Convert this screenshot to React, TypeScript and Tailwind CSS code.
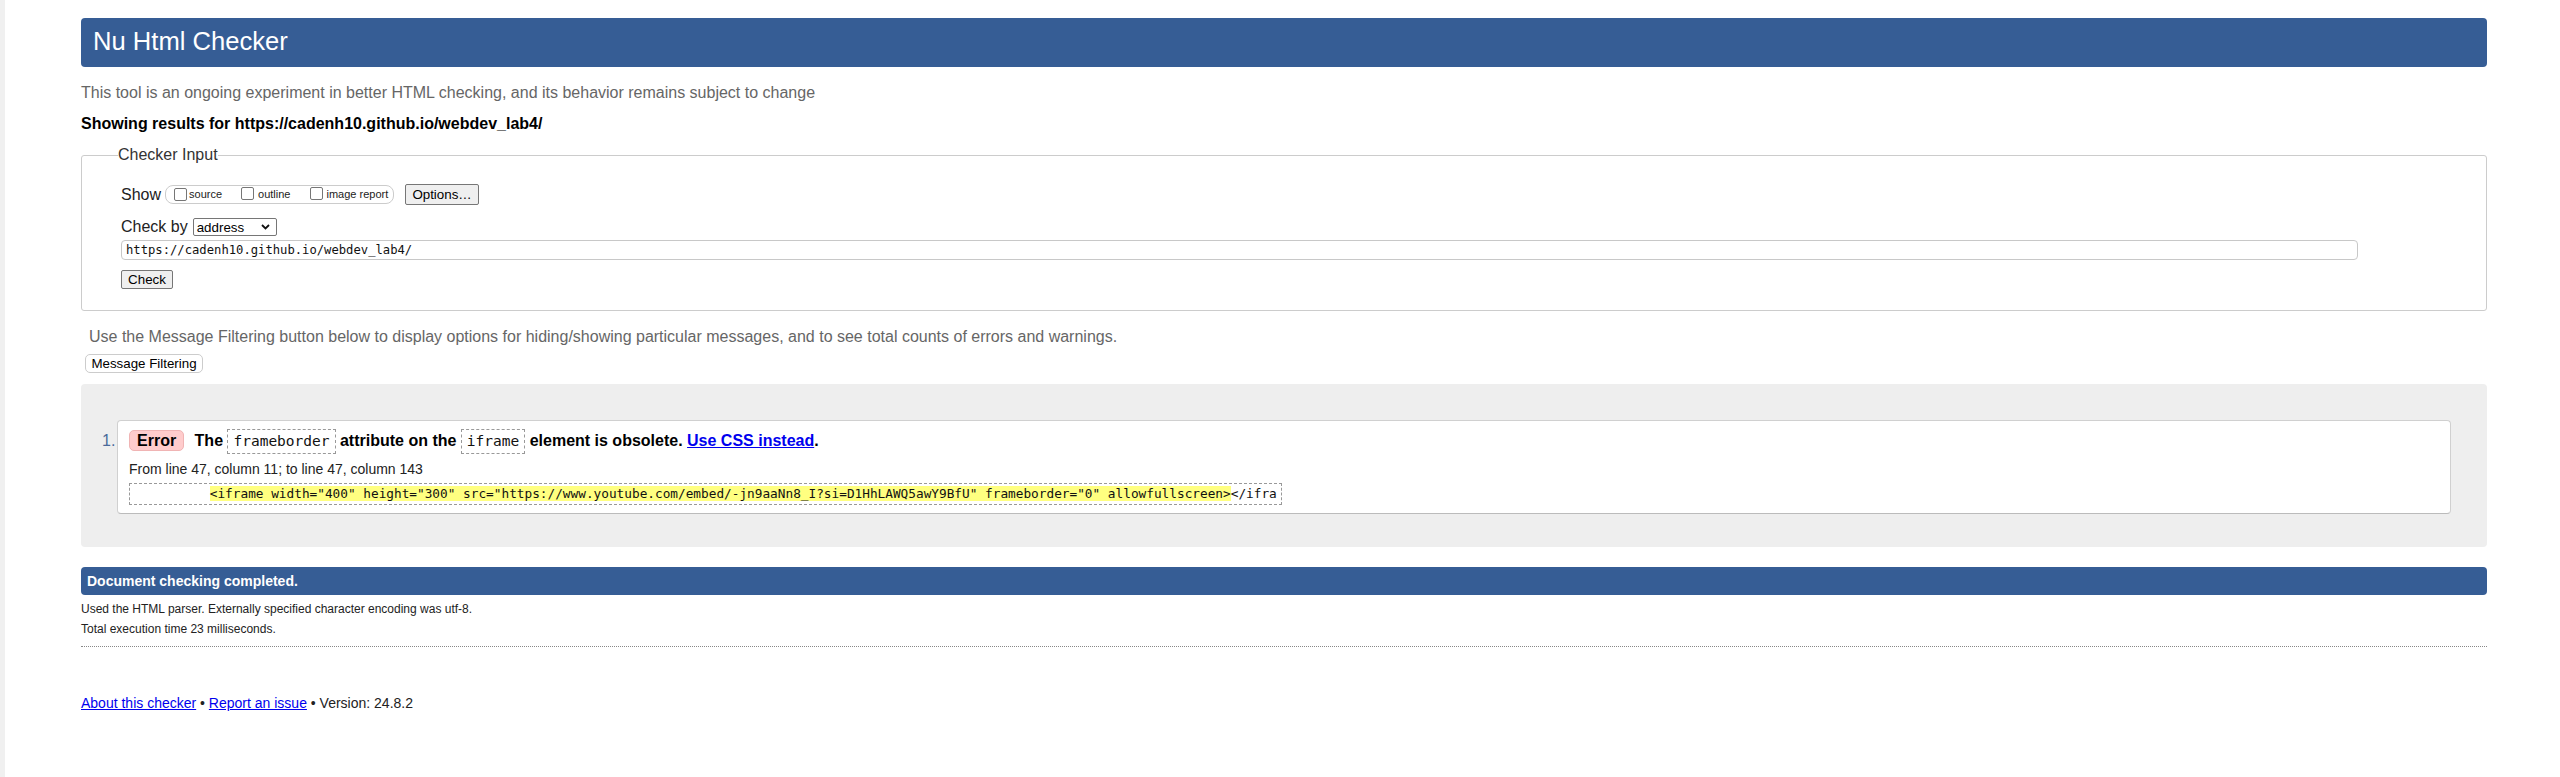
const sans = { fontFamily: '"Liberation Sans", Arial, sans-serif' };

const Checkbox = () => (
  <span className="inline-block w-[13px] h-[13px] border border-[#767676] rounded-[2px] bg-white shrink-0" />
);

const CodeBox = ({ children }: { children: React.ReactNode }) => (
  <code className="inline-block border border-dashed border-[#999] px-[5px] leading-[23px] text-[14.5px] font-normal font-['DejaVu_Sans_Mono',monospace] text-[#111] align-baseline">
    {children}
  </code>
);

const extract =
  '<iframe width="400" height="300" src="https://www.youtube.com/embed/-jn9aaNn8_I?si=D1HhLAWQ5awY9BfU" frameborder="0" allowfullscreen>';

export default function App() {
  return (
    <div className="min-h-[777px] bg-white flex text-black font-['Liberation_Sans',Arial,sans-serif]" style={sans}>
      <div className="w-[5px] bg-[#f0f0f0] shrink-0" />
      <div className="ml-[76px] w-[2406px] flex flex-col">
        {/* header */}
        <h1 className="mt-[18px] h-[49px] rounded-[4px] bg-[#365d95] text-white text-[25.6px] font-normal leading-[30px] pt-[8px] pl-[12px]">
          Nu Html Checker
        </h1>

        <p className="mt-[17px] text-[16px] leading-[18px] text-[#666]">
          This tool is an ongoing experiment in better HTML checking, and its behavior remains subject to change
        </p>
        <p className="mt-[13px] text-[16px] leading-[18px] font-bold">
          Showing results for https://cadenh10.github.io/webdev_lab4/
        </p>

        {/* checker input */}
        <fieldset className="mt-[13px] border border-[#ccc] rounded-[3px] pb-[21px]">
          <legend className="ml-[36px] text-[16px] leading-[18px] text-[#333]">Checker Input</legend>

          <div className="pl-[39px]">
            <div className="mt-[20px] flex items-center h-[21px]">
              <span className="text-[16px] leading-[18px] text-[#222]">Show</span>
              <div className="ml-[4px] h-[19px] w-[229px] border border-[#ccc] rounded-[8px] flex items-center pl-[8px] text-[11px] leading-[13px] text-[#222]">
                <Checkbox />
                <span className="ml-[2px]">source</span>
                <span className="ml-[19px]"><Checkbox /></span>
                <span className="ml-[4px]">outline</span>
                <span className="ml-[20px]"><Checkbox /></span>
                <span className="ml-[3px]">image report</span>
              </div>
              <div className="ml-[11px] h-[21px] w-[74px] border border-[#767676] rounded-[2px] bg-[#efefef] flex items-center justify-center text-[13.33px] leading-[15px]">
                Options…
              </div>
            </div>

            <div className="mt-[13px] flex items-center h-[18px]">
              <span className="text-[16px] leading-[18px] text-[#222]">Check by</span>
              <div className="ml-[5px] h-[18px] w-[84px] border border-[#767676] rounded-[2px] bg-white flex items-center pl-[3px] pr-[6px] justify-between text-[13.33px] leading-[15px]">
                <span>address</span>
                <svg width="9" height="6" viewBox="0 0 9 6">
                  <path d="M1 1l3.5 3.5L8 1" fill="none" stroke="#111" strokeWidth="1.8" />
                </svg>
              </div>
            </div>

            <div className="mt-[4px] h-[20px] w-[2237px] border border-[#c8c8c8] rounded-[4px] flex items-center pl-[4px] text-[12.2px] leading-[14px] text-[#111] font-['DejaVu_Sans_Mono',monospace]">
              https://cadenh10.github.io/webdev_lab4/
            </div>

            <div className="mt-[10px] h-[19px] w-[52px] border border-[#767676] rounded-[2px] bg-[#efefef] flex items-center justify-center text-[13.33px] leading-[15px]">
              Check
            </div>
          </div>
        </fieldset>

        <p className="mt-[17px] ml-[8px] text-[16px] leading-[18px] text-[#666]">
          Use the Message Filtering button below to display options for hiding/showing particular messages, and to see total counts of errors and warnings.
        </p>
        <div className="mt-[8px] ml-[4px] h-[19px] w-[118px] border border-[#ccc] rounded-[5px] bg-white flex items-center justify-center text-[13.33px] leading-[15px]">
          Message Filtering
        </div>

        {/* results */}
        <div className="mt-[11px] bg-[#eeeeee] rounded-[4px] pt-[36px] pb-[33px] pl-[21px] pr-[36px] flex">
          <span className="w-[15px] pt-[8px] text-[16px] leading-[25px] text-[#4a6a9a] shrink-0">1.</span>
          <div className="flex-1 bg-white border border-[#d0d0d0] border-b-[#bbb] rounded-[4px] pl-[11px] pt-[7px] pb-[8px]">
            <p className="text-[16px] leading-[25px] font-bold">
              <span className="inline-block border border-[#f0b4b4] bg-[#ffcccc] rounded-[5px] px-[7px] leading-[19px] mr-[6px]">
                Error
              </span>{' '}
              The <CodeBox>frameborder</CodeBox> attribute on the <CodeBox>iframe</CodeBox> element is obsolete.{' '}
              <a className="text-[#0000ee] underline">Use CSS instead</a>.
            </p>
            <p className="mt-[6px] text-[14px] leading-[18px] text-[#222]">
              From line 47, column 11; to line 47, column 143
            </p>
            <code className="mt-[5px] block w-fit border border-dashed border-[#999] pl-[3px] pr-[4px] leading-[20px] text-[12.75px] whitespace-pre text-[#111] font-['DejaVu_Sans_Mono',monospace]">
              {'          '}
              <span className="bg-[#ffff80]">{extract}</span>
              {'</ifra'}
            </code>
          </div>
        </div>

        <div className="mt-[20px] h-[28px] bg-[#365d95] rounded-[4px] text-white font-bold text-[14px] leading-[28px] pl-[6px]">
          Document checking completed.
        </div>
        <p className="mt-[4px] text-[12px] leading-[20px] text-[#222]">
          Used the HTML parser. Externally specified character encoding was utf-8.
        </p>
        <p className="text-[12px] leading-[20px] text-[#222]">Total execution time 23 milliseconds.</p>
        <div className="mt-[7px] border-t border-dotted border-[#888]" />

        <p className="mt-[47px] text-[14px] leading-[18px] text-[#222]">
          <a className="text-[#0000ee] underline">About this checker</a> •{' '}
          <a className="text-[#0000ee] underline">Report an issue</a> • Version: 24.8.2
        </p>
      </div>
    </div>
  );
}
